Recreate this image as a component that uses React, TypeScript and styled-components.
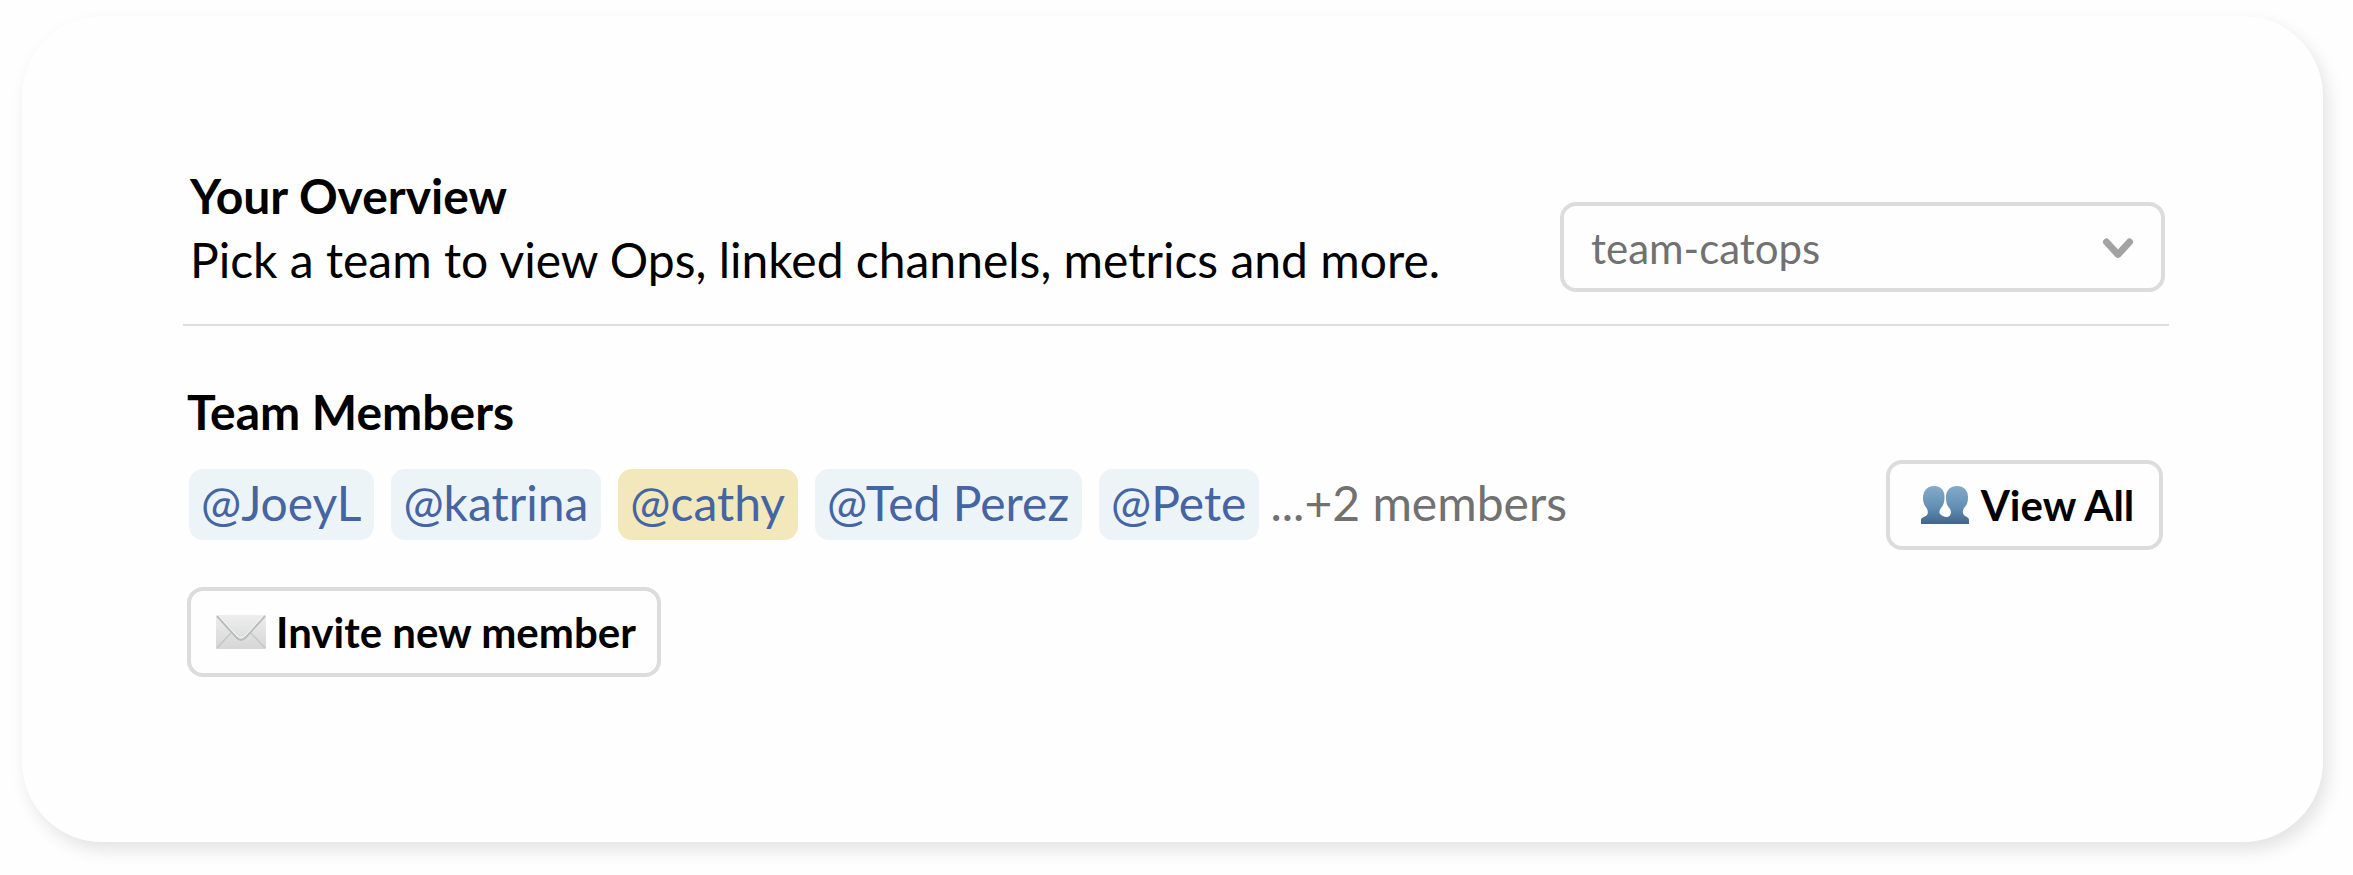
import React from "react";
import styled, { createGlobalStyle } from "styled-components";

const GlobalStyle = createGlobalStyle`
  *, *::before, *::after { box-sizing: border-box; }
  body {
    margin: 0;
    background: #fefefe;
    color: #000;
    font-family: Lato, "Liberation Sans", sans-serif;
    font-size: 48px;
    line-height: 64px;
  }
`;

const Card = styled.main`
  margin: 16px 30px 33px 22px;
  padding: 148px 154px 165px 161px;
  border-radius: 80px;
  background: #fefefe;
  box-shadow: 5px 8px 17px rgba(0, 0, 0, 0.11);
`;

const Header = styled.header`
  display: flex;
  align-items: flex-end;
  justify-content: space-between;
  gap: 32px;
  padding: 0 4px 32px 7px;
  border-bottom: 2px solid #dedede;
`;

const Title = styled.h1`
  margin: 0;
  font-size: 48px;
  font-weight: 700;
  line-height: 64px;
`;

const Lead = styled.p`
  margin: 0;
`;

const SelectBox = styled.div`
  position: relative;
  flex: 0 0 auto;
  width: 605px;
`;

const TeamSelect = styled.select`
  display: block;
  width: 100%;
  height: 90px;
  padding: 2px 80px 0 27px;
  border: 4px solid #dcdcdc;
  border-radius: 16px;
  appearance: none;
  background: #fefefe;
  color: #717171;
  font-family: inherit;
  font-size: 42px;
`;

const Chevron = styled.svg`
  position: absolute;
  top: 36px;
  right: 31px;
  pointer-events: none;
`;

const Members = styled.section`
  display: flex;
  flex-direction: column;
  align-items: flex-start;
  padding: 54px 6px 0 4px;
`;

const SectionTitle = styled.h2`
  margin: 0 0 16px;
  font-size: 48px;
  font-weight: 700;
  line-height: 64px;
`;

const MemberRow = styled.div`
  display: flex;
  align-items: center;
  justify-content: space-between;
  align-self: stretch;
  gap: 32px;
  margin-bottom: 37px;
`;

const MemberList = styled.ul`
  display: flex;
  flex-wrap: wrap;
  align-items: center;
  gap: 17px;
  margin: 0;
  padding: 0 0 2px 2px;
  line-height: 68px;
  list-style: none;
`;

const Mention = styled.a<{ $me?: boolean }>`
  display: block;
  padding: 0 13px 3px 12px;
  border-radius: 14px;
  background: ${(p) => (p.$me ? "#f2e8bb" : "#ecf4f8")};
  color: #4565a2;
  text-decoration: none;
`;

const More = styled.li`
  margin-left: -6px;
  padding-bottom: 3px;
  color: #717171;
`;

const OutlineButton = styled.button`
  display: flex;
  flex: 0 0 auto;
  align-items: center;
  justify-content: center;
  gap: 10px;
  min-width: 277px;
  height: 90px;
  padding: 0 21px 0 25px;
  border: 4px solid #dcdcdc;
  border-radius: 16px;
  background: #fefefe;
  color: #000;
  font-family: inherit;
  font-size: 42px;
  font-weight: 700;
  white-space: nowrap;
`;

const PeopleIcon = () => (
  <svg width="52" height="42" viewBox="0 0 52 42" aria-hidden="true">
    <defs>
      <linearGradient id="people" x1="0" y1="0" x2="0" y2="1">
        <stop offset="0" stopColor="#83abc9" />
        <stop offset="0.55" stopColor="#648fb4" />
        <stop offset="1" stopColor="#41658c" />
      </linearGradient>
    </defs>
    <path
      fill="url(#people)"
      d="M15 2C22 2 26 7 25.500 14Q25.500 20 22 24Q19.500 27 21 30C23 32 26 33 27 33C30 33 32 31 32 28Q32 26 29.500 23Q27 20 27 14C26.500 7 31 2 38 2C45 2 49.500 7 49 14Q49 20 45 24Q42.500 28 45 31C47 33 50 33 50 36V40H2V36C2 33 6 33 8 31Q10 28 7.500 24Q4 20 4 14C4 7 8 2 15 2Z"
    />
  </svg>
);

const EnvelopeIcon = () => (
  <svg width="50" height="36" viewBox="1 0 50 36" aria-hidden="true">
    <defs>
      <linearGradient id="paper" x1="0" y1="0" x2="0" y2="1">
        <stop offset="0" stopColor="#eeeeee" />
        <stop offset="1" stopColor="#d6d6d6" />
      </linearGradient>
    </defs>
    <rect x="1" y="1" width="50" height="34" rx="1" fill="url(#paper)" />
    <path d="M2 34L17 18M50 34L35 18" fill="none" stroke="#c6c6c6" strokeWidth="1.500" />
    <path d="M2 2L21 23Q26 29 31 23L50 2" fill="none" stroke="#b9bcc0" strokeWidth="2" />
    <path d="M3 1L21 21Q26 26 31 21L49 1" fill="none" stroke="#f6f6f6" strokeWidth="1" />
  </svg>
);

const members = [
  { name: "JoeyL" },
  { name: "katrina" },
  { name: "cathy", me: true },
  { name: "Ted Perez" },
  { name: "Pete" },
];

export default function App() {
  return (
    <>
      <GlobalStyle />
      <Card>
        <Header>
          <div>
            <Title>Your Overview</Title>
            <Lead>Pick a team to view Ops, linked channels, metrics and more.</Lead>
          </div>
          <SelectBox>
            <TeamSelect aria-label="Team" defaultValue="team-catops">
              <option value="team-catops">team-catops</option>
            </TeamSelect>
            <Chevron width="32" height="22" viewBox="0 0 32 22" aria-hidden="true">
              <path
                d="M4.500 4L16 16.500L27.500 4"
                fill="none"
                stroke="#a2a2a2"
                strokeWidth="7"
                strokeLinecap="round"
                strokeLinejoin="round"
              />
            </Chevron>
          </SelectBox>
        </Header>
        <Members>
          <SectionTitle>Team Members</SectionTitle>
          <MemberRow>
            <MemberList>
              {members.map((m) => (
                <li key={m.name}>
                  <Mention href={`#${encodeURIComponent(m.name)}`} $me={m.me}>
                    @{m.name}
                  </Mention>
                </li>
              ))}
              <More>...+2 members</More>
            </MemberList>
            <OutlineButton type="button">
              <PeopleIcon />
              View All
            </OutlineButton>
          </MemberRow>
          <OutlineButton type="button">
            <EnvelopeIcon />
            Invite new member
          </OutlineButton>
        </Members>
      </Card>
    </>
  );
}
